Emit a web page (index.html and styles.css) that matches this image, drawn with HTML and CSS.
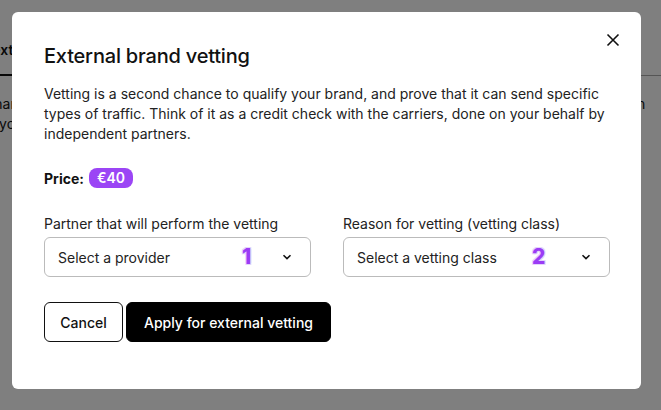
FILE: index.html
```html
<!DOCTYPE html>
<html lang="en">
<head>
  <meta charset="UTF-8" />
  <meta name="viewport" content="width=device-width, initial-scale=1" />
  <title>External brand vetting</title>
  <link rel="stylesheet" href="styles.css">
</head>
<body>

  <!-- Page behind the dialog -->
  <div class="page">
    <div class="tabs">
      <span class="tab active">Context</span>
      <span class="tab">Details</span>
    </div>
    <p class="page-text">Your name has been registered. To send messages to US numbers, a campaign must be linked so it can</p>
    <p class="page-text">Once you are ready.</p>
  </div>

  <div class="overlay">
    <div class="modal">
      <button class="close-btn" aria-label="Close">
        <svg width="14" height="14" viewBox="0 0 14 14">
          <path d="M1.5 1.5 L12.5 12.5 M12.5 1.5 L1.5 12.5" stroke="#111" stroke-width="1.6" fill="none" />
        </svg>
      </button>

      <h1 class="modal-title">External brand vetting</h1>
      <p class="modal-text">Vetting is a second chance to qualify your brand, and prove that it can send specific types of traffic. Think of it as a credit check with the carriers, done on your behalf by independent partners.</p>

      <div class="price">
        <strong>Price:</strong>
        <span class="badge">€40</span>
      </div>

      <div class="fields">
        <div class="field">
          <label for="provider">Partner that will perform the vetting</label>
          <div class="select">
            <span>Select a provider</span>
            <span class="step step-1">1</span>
            <svg class="chevron" width="10" height="6" viewBox="0 0 10 6">
              <path d="M1.5 1.2 L5 4.6 L8.5 1.2" stroke="#111" stroke-width="1.6" fill="none" />
            </svg>
          </div>
        </div>
        <div class="field">
          <label for="vclass">Reason for vetting (vetting class)</label>
          <div class="select">
            <span>Select a vetting class</span>
            <span class="step step-2">2</span>
            <svg class="chevron" width="10" height="6" viewBox="0 0 10 6">
              <path d="M1.5 1.2 L5 4.6 L8.5 1.2" stroke="#111" stroke-width="1.6" fill="none" />
            </svg>
          </div>
        </div>
      </div>

      <div class="actions">
        <button class="btn btn-cancel">Cancel</button>
        <button class="btn btn-apply">Apply for external vetting</button>
      </div>
    </div>
  </div>

</body>
</html>
```

FILE: styles.css
```css
body {
  font-family: Inter, "Noto Sans", sans-serif;
  margin: 0;
  padding: 0;
  background: #fff;
  color: #111;
  height: 410px;
  overflow: hidden;
}
.page {
  margin-left: -40px;
  overflow: hidden;
  white-space: nowrap;
}
.tabs {
  display: flex;
  gap: 30px;
  height: 75px;
  border-bottom: 1px solid #aaa;
  align-items: flex-end;
}
.tab {
  font-size: 14px;
  font-weight: 600;
  padding: 0 0 16px 0;
}
.tab.active {
  border-bottom: 2px solid #111;
  margin-bottom: -1px;
}
.page-text {
  margin: 0;
  font-size: 14px;
  line-height: 20px;
}
.page-text:first-of-type {
  margin-top: 18px;
}
.overlay {
  position: fixed;
  inset: 0;
  background: rgba(0,0,0,0.5);
  padding: 12px;
}
.modal {
  position: relative;
  box-sizing: border-box;
  width: 629px;
  height: 377px;
  background: #fff;
  border-radius: 6px;
  padding: 30px 32px 0 32px;
}
.close-btn {
  position: absolute;
  top: 21px;
  right: 21px;
  background: none;
  border: none;
  padding: 0;
  cursor: pointer;
  line-height: 0;
}
.modal-title {
  font-size: 20px;
  font-weight: 500;
  margin: 0 0 14px 0;
  line-height: 28px;
  letter-spacing: -0.2px;
}
.modal-text {
  font-size: 14px;
  line-height: 20px;
  color: #222;
  margin: 0 0 24px 0;
}
.price {
  display: flex;
  align-items: center;
  gap: 5px;
  font-size: 14px;
  margin-bottom: 26px;
}
.badge {
  background: #9b45f5;
  color: #fff;
  font-weight: 600;
  font-size: 14px;
  padding: 0 8px;
  height: 20px;
  line-height: 20px;
  border-radius: 8px;
}
.fields {
  display: grid;
  grid-template-columns: 267px 267px;
  gap: 32px;
}
.field label {
  display: block;
  font-size: 14px;
  line-height: 20px;
  color: #222;
  margin-bottom: 3px;
}
.select {
  position: relative;
  display: flex;
  align-items: center;
  justify-content: space-between;
  height: 40px;
  box-sizing: border-box;
  border: 1px solid #bbb;
  border-radius: 6px;
  padding: 0 18px 0 13px;
  font-size: 14px;
  color: #222;
}
.step {
  position: absolute;
  top: 7px;
  font-size: 21px;
  font-weight: 800;
  color: #9b3cf5;
  line-height: 24px;
  text-shadow: 1px 1px 0 #e4d4fb, -1px -1px 0 #e4d4fb, 1px -1px 0 #e4d4fb, -1px 1px 0 #e4d4fb;
}
.step-1 {
  left: 197px;
}
.step-2 {
  left: 188px;
}
.actions {
  display: flex;
  gap: 3px;
  margin-top: 25px;
}
.btn {
  height: 40px;
  font-family: Inter, "Noto Sans", sans-serif;
  font-size: 14px;
  font-weight: 500;
  border-radius: 6px;
  cursor: pointer;
}
.btn-cancel {
  background: #fff;
  border: 1px solid #111;
  color: #111;
  width: 79px;
}
.btn-apply {
  background: #000;
  border: 1px solid #000;
  color: #fff;
  width: 205px;
}
```
